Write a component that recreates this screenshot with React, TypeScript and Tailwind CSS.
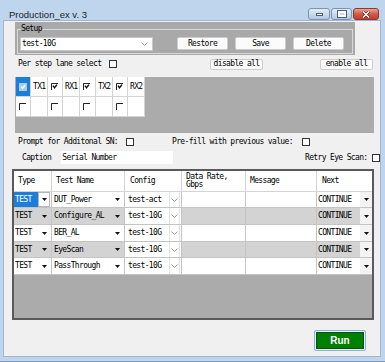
const COLS = 'grid grid-cols-[38px_73px_57px_64px_71px_55px]'

const ROWS = [
  { name: 'DUT_Power', cfg: 'test-act', alt: false, sel: true, h: 'h-[16px]' },
  { name: 'Configure_AL', cfg: 'test-10G', alt: true, sel: false, h: 'h-[17px]' },
  { name: 'BER_AL', cfg: 'test-10G', alt: false, sel: false, h: 'h-[17px]' },
  { name: 'EyeScan', cfg: 'test-10G', alt: true, sel: false, h: 'h-[16px]' },
  { name: 'PassThrough', cfg: 'test-10G', alt: false, sel: false, h: 'h-[17px]' },
]

const LANES = [
  { w: 'w-[15px]', kind: 'sel' },
  { w: 'w-[17px]', label: 'TX1' },
  { w: 'w-[15px]', kind: 'chk' },
  { w: 'w-[17px]', label: 'RX1' },
  { w: 'w-[16px]', kind: 'chk' },
  { w: 'w-[17px]', label: 'TX2' },
  { w: 'w-[15px]', kind: 'chk' },
  { w: 'w-[17px]', label: 'RX2' },
]

function Box() {
  return <span className="inline-block w-[8px] h-[8px] shrink-0 border border-[#333] bg-white" />
}

function Tri() {
  return (
    <svg width="5" height="3" viewBox="0 0 5 3">
      <path d="M0 0h5L2.5 3z" fill="#111" />
    </svg>
  )
}

function Chev() {
  return (
    <svg width="7" height="4" viewBox="0 0 7 4">
      <path d="M0.5 0.5l3 3 3-3" stroke="#9a9a9a" fill="none" />
    </svg>
  )
}

// grid checkbox: only the top-left edge is drawn in the reference
function Tick({ checked, light }: { checked: boolean; light?: boolean }) {
  if (light) {
    return (
      <svg width="8" height="8" viewBox="0 0 8 8">
        <rect x="0" y="0" width="8" height="8" fill="#a8cbef" />
        <path d="M2 3.5l1.6 2L6.2 1.8" stroke="#fff" strokeWidth="1.4" fill="none" />
      </svg>
    )
  }
  return (
    <svg width="7" height="7" viewBox="0 0 7 7">
      <path d="M0.5 7V0.5H7" stroke="#222" fill="none" />
      {checked && <path d="M2 2.6l1.5 2.2L6 1.6" stroke="#111" strokeWidth="1.4" fill="none" />}
    </svg>
  )
}

function Btn({ label, w }: { label: string; w: string }) {
  return (
    <div className={`${w} h-full flex items-center justify-center bg-[#fbfbfb] border border-[#cdcdcd] rounded-[2px]`}>
      {label}
    </div>
  )
}

export default function App() {
  return (
    <div className="w-[385px] h-[362px] overflow-hidden bg-[#bfd5ed] border-b border-[#7d9fc8] flex flex-col font-['DejaVu_Sans_Mono',monospace] text-[8px] tracking-[-0.65px] text-black">
      {/* title bar */}
      <div className="h-[21px] shrink-0 flex items-start">
        <span className="ml-[9px] mt-[9px] font-['Liberation_Sans',sans-serif] text-[9.5px] leading-[11px] tracking-normal text-[#1e1e1e]">
          Production_ex v. 3
        </span>
        <div className="ml-auto mr-[6px] mt-[8px] flex gap-[1px]">
          <div className="w-[22px] h-[12px] rounded-[3px] border border-[#7b93b3] bg-linear-to-b from-[#e4edf8] to-[#b3c8e3] flex items-center justify-center">
            <span className="w-[7px] h-[3px] bg-white border border-[#4a5f7a]" />
          </div>
          <div className="w-[21px] h-[12px] rounded-[3px] border border-[#7b93b3] bg-linear-to-b from-[#e4edf8] to-[#b3c8e3] flex items-center justify-center">
            <span className="w-[8px] h-[6px] border-2 border-white outline outline-1 outline-[#4a5f7a]" />
          </div>
          <div className="w-[26px] h-[12px] rounded-[3px] border border-[#8d3a30] bg-linear-to-b from-[#e8a395] via-[#d35a48] to-[#c23d2c] flex items-center justify-center">
            <svg width="8" height="7" viewBox="0 0 8 7">
              <path d="M1 0.5l6 6M7 0.5l-6 6" stroke="#5a1a12" strokeWidth="2.6" />
              <path d="M1 0.5l6 6M7 0.5l-6 6" stroke="#fff" strokeWidth="1.5" />
            </svg>
          </div>
        </div>
      </div>

      {/* client area */}
      <div className="ml-[4px] mr-[5px] mb-[5px] flex-1 bg-[#f0f0f0] outline outline-1 outline-[#9fb7d3] flex flex-col overflow-hidden">
        {/* Setup */}
        <div className="ml-[11px] mt-[1px] w-[340px] h-[33px] shrink-0 bg-[#a9a9a9] pt-[3px] px-[2px]">
          <fieldset className="h-[29px] border border-[#d9d9d9] px-[2px]">
            <legend className="ml-[1px] leading-[8px]">Setup</legend>
            <div className="mt-[4px] h-[14px] flex items-start">
              <div className="w-[133px] h-[14px] bg-white border border-[#c8c8c8] flex items-center pl-[1px] pr-[4px]">
                <span className="flex-1">test-10G</span>
                <Chev />
              </div>
              <div className="ml-[24px] h-[13px] flex gap-[7px]">
                <Btn label="Restore" w="w-[51px]" />
                <Btn label="Save" w="w-[51px]" />
                <Btn label="Delete" w="w-[51px]" />
              </div>
            </div>
          </fieldset>
        </div>

        {/* lane select row */}
        <div className="mt-[3px] h-[12px] shrink-0 flex items-center pl-[14px]">
          <span className="w-[91px]">Per step lane select</span>
          <Box />
          <div className="ml-[93px] h-[11px] flex">
            <Btn label="disable all" w="w-[53px]" />
          </div>
          <div className="ml-[57px] h-[11px] flex">
            <Btn label="enable all" w="w-[53px]" />
          </div>
        </div>

        {/* lane grid */}
        <div className="ml-[11px] mt-[7px] w-[359px] h-[56px] shrink-0 bg-[#ababab] pl-[1px]">
          {[0, 1].map((r) => (
            <div key={r} className="flex h-[20px]">
              {LANES.map((c, i) => {
                const blue = r === 0 && c.kind === 'sel'
                return (
                  <div
                    key={i}
                    className={`${c.w} h-full border-r border-b border-[#d4d4d4] flex items-center pl-[3px] ${blue ? 'bg-[#1b7fda]' : 'bg-white'}`}
                  >
                    {c.label ? (r === 0 ? <span className="-ml-[1px]">{c.label}</span> : null) : <Tick checked={r === 0} light={blue} />}
                  </div>
                )
              })}
            </div>
          ))}
        </div>

        {/* prompt row */}
        <div className="mt-[4px] h-[10px] shrink-0 flex items-center pl-[14px]">
          <span className="w-[108px]">Prompt for Additonal SN:</span>
          <Box />
          <span className="ml-[38px] w-[130px]">Pre-fill with previous value:</span>
          <Box />
        </div>

        {/* caption row */}
        <div className="mt-[4px] h-[13px] shrink-0 flex items-center pl-[18px]">
          <span className="w-[40px]">Caption</span>
          <div className="w-[114px] h-[13px] bg-white flex items-center pl-[1px]">Serial Number</div>
          <span className="ml-[132px] w-[67px] shrink-0">Retry Eye Scan:</span>
          <Box />
        </div>

        {/* steps table */}
        <div className="mt-[5px] ml-[8px] w-[362px] h-[151px] shrink-0 border-2 border-[#5a5a5a] bg-[#ababab] flex flex-col">
          <div className={`${COLS} h-[21px] bg-white`}>
            <div className="border-r border-b border-[#d4d4d4] flex items-center pl-[4px]">Type</div>
            <div className="border-r border-b border-[#d4d4d4] flex items-center pl-[4px]">Test Name</div>
            <div className="border-r border-b border-[#d4d4d4] flex items-center pl-[5px]">Config</div>
            <div className="border-r border-b border-[#d4d4d4] flex flex-col justify-center pl-[4px] leading-[8px] pb-[1px]">
              <span>Data Rate,</span>
              <span>Gbps</span>
            </div>
            <div className="border-r border-b border-[#d4d4d4] flex items-center pl-[4px]">Message</div>
            <div className="border-b border-[#d4d4d4] flex items-center pl-[5px]">Next</div>
          </div>
          {ROWS.map((r) => {
            const bg = r.alt ? 'bg-[#d3d3d3]' : 'bg-white'
            return (
              <div key={r.name} className={`${COLS} ${r.h} ${bg}`}>
                <div className="border-r border-b border-[#c4c4c4] flex">
                  <div className={`w-[24px] flex items-center pl-[1px] ${r.sel ? 'bg-[#1b7fda] text-white' : ''}`}>TEST</div>
                  <div className={`w-[12px] flex items-center justify-center ${r.sel ? 'bg-white border border-[#b5b5b5]' : ''}`}>
                    <Tri />
                  </div>
                </div>
                <div className="border-r border-b border-[#c4c4c4] flex">
                  <div className="flex-1 flex items-center pl-[2px]">{r.name}</div>
                  <div className="w-[13px] flex items-center justify-center">
                    <Tri />
                  </div>
                </div>
                <div className="border-r border-b border-[#c4c4c4] flex bg-white pl-[1px]">
                  <div className="flex-1 flex items-center pl-[2px]">{r.cfg}</div>
                  <div className="w-[11px] mr-[1px] border-x border-[#e2e2e2] flex items-center justify-center">
                    <Chev />
                  </div>
                </div>
                <div className="border-r border-b border-[#c4c4c4]" />
                <div className="border-r border-b border-[#c4c4c4]" />
                <div className="border-b border-[#c4c4c4] flex">
                  <div className="flex-1 flex items-center pl-[1px]">CONTINUE</div>
                  <div className="w-[12px] bg-[#f3f3f3] flex items-center justify-center">
                    <Tri />
                  </div>
                </div>
              </div>
            )
          })}
        </div>

        {/* run */}
        <div className="mt-[10px] ml-[310px] w-[52px] h-[21px] shrink-0 border border-[#7fb2e5] rounded-[2px] p-[1px]">
          <div className="w-full h-full bg-[#008000] border border-[#0b4f0b] flex items-center justify-center font-['Liberation_Sans',sans-serif] text-[10px] font-bold tracking-normal text-white">
            Run
          </div>
        </div>
      </div>
    </div>
  )
}
